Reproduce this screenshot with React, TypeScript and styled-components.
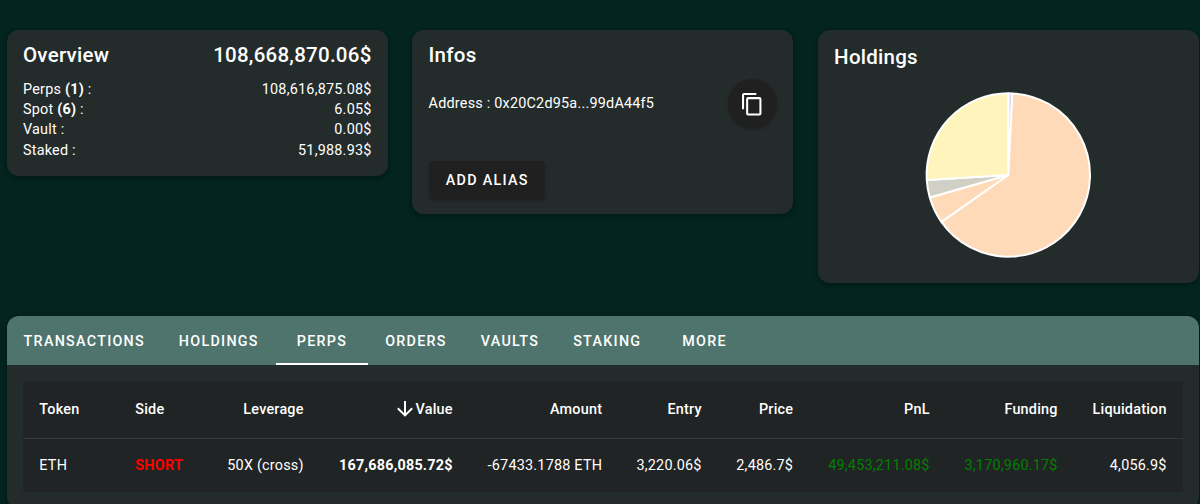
import React from 'react'
import styled, { createGlobalStyle } from 'styled-components'

const GlobalStyle = createGlobalStyle`
	* {
		box-sizing: border-box;
	}

	html {
		height: 100%;
		overflow: hidden;
		background: #03241f;
	}

	body {
		margin: 0;
		color: #fff;
		font-family: Roboto, sans-serif;
		font-size: 14.4px;
		line-height: 20.3px;
		letter-spacing: 0.22px;
	}
`

const Page = styled.main`
	height: 504px;
	padding: 30px 1px 0 6.7px;
	overflow: hidden;
`

const Cards = styled.section`
	display: grid;
	grid-template-columns: repeat(3, 1fr);
	align-items: start;
	gap: 24.4px;
	height: 286.3px;
`

const Card = styled.article<{ $height: number }>`
	display: flex;
	flex-direction: column;
	height: ${({ $height }) => $height}px;
	padding: 9px 16.3px;
	border-radius: 12px;
	background: #242c2b;
	box-shadow: 0 2px 4px rgba(0, 0, 0, 0.2), 0 1px 6px rgba(0, 0, 0, 0.12);
`

const Title = styled.h2<{ $offset?: number }>`
	display: flex;
	justify-content: space-between;
	margin: ${({ $offset = 0 }) => $offset}px 0 0;
	font-size: 20.5px;
	font-weight: 500;
	line-height: 32px;
	letter-spacing: 0.25px;
`

const Balances = styled.div`
	margin-top: 8.7px;
`

const Balance = styled.div`
	display: flex;
	justify-content: space-between;
`

const AddressRow = styled.div`
	display: flex;
	align-items: center;
	justify-content: space-between;
	height: 49px;
	margin-top: 8.4px;
`

const CopyButton = styled.button`
	display: flex;
	align-items: center;
	justify-content: center;
	width: 49px;
	height: 49px;
	padding: 0;
	border: 0;
	border-radius: 50%;
	background: #202020;
	color: #fff;
	box-shadow: 0 2px 3px rgba(0, 0, 0, 0.22);
`

const AliasButton = styled.button`
	align-self: flex-start;
	width: 116.5px;
	height: 38px;
	margin-top: 32.3px;
	padding: 1px 0 0 1px;
	border: 0;
	border-radius: 4px;
	background: #202020;
	color: #fff;
	font: 500 14.35px Roboto, sans-serif;
	letter-spacing: 1.29px;
	box-shadow: 0 2px 3px rgba(0, 0, 0, 0.22);
`

const Chart = styled.svg`
	align-self: center;
	margin: 18px 0 0;
	flex-shrink: 0;
`

const Panel = styled.section`
	height: 193px;
	overflow: hidden;
	border-radius: 12px;
	background: #242c2b;
	box-shadow: 0 2px 4px rgba(0, 0, 0, 0.2), 0 1px 6px rgba(0, 0, 0, 0.12);
`

const Tabs = styled.nav`
	display: flex;
	height: 48.9px;
	background: #4e746d;
`

const Tab = styled.button<{ $active?: boolean }>`
	min-width: 92.5px;
	padding: ${({ $active }) => ($active ? '2px' : '0')} 16.93px 0;
	border: 0;
	border-bottom: ${({ $active }) => ($active ? '2px solid #fff' : '0')};
	background: none;
	color: #fff;
	font: 500 14.3px Roboto, sans-serif;
	letter-spacing: 1.29px;
`

const Table = styled.table`
	width: 1160px;
	margin: 16px 0 0 16.3px;
	border-collapse: collapse;
	table-layout: fixed;
	background: #212424;
`

const HeadCell = styled.th<{ $left?: boolean }>`
	height: 57px;
	padding: 1.5px 16.3px 0;
	border-bottom: 1px solid #363939;
	font-weight: 500;
	text-align: ${({ $left }) => ($left ? 'left' : 'right')};
	white-space: nowrap;
`

const Cell = styled.td<{ $left?: boolean; $color?: string; $bold?: boolean }>`
	height: 53.5px;
	padding: 1px 16.3px 0;
	color: ${({ $color = '#fff' }) => $color};
	font-weight: ${({ $bold }) => ($bold ? 700 : 400)};
	text-align: ${({ $left }) => ($left ? 'left' : 'right')};
	white-space: nowrap;
`

const SortIcon = styled.svg`
	margin-right: 2px;
	vertical-align: -3px;
`

const balances = [
	{ label: 'Perps', count: 1, value: '108,616,875.08$' },
	{ label: 'Spot', count: 6, value: '6.05$' },
	{ label: 'Vault', value: '0.00$' },
	{ label: 'Staked', value: '51,988.93$' },
]

const tabs = ['TRANSACTIONS', 'HOLDINGS', 'PERPS', 'ORDERS', 'VAULTS', 'STAKING', 'MORE']

const columns = [
	{ title: 'Token', value: 'ETH', width: 96, left: true },
	{ title: 'Side', value: 'SHORT', width: 92, left: true, color: '#f00', bold: true },
	{ title: 'Leverage', value: '50X (cross)', width: 109 },
	{ title: 'Value', value: '167,686,085.72$', width: 149, bold: true, sorted: true },
	{ title: 'Amount', value: '-67433.1788 ETH', width: 149.5 },
	{ title: 'Entry', value: '3,220.06$', width: 99.5 },
	{ title: 'Price', value: '2,486.7$', width: 91.5 },
	{ title: 'PnL', value: '49,453,211.08$', width: 136.5, color: '#008000' },
	{ title: 'Funding', value: '3,170,960.17$', width: 128, color: '#008000' },
	{ title: 'Liquidation', value: '4,056.9$', width: 109 },
]

// angles in degrees, clockwise from the top
const slices = [
	{ from: 0, to: 2.9, fill: '#dcd3ee' },
	{ from: 2.9, to: 235, fill: '#ffdab9' },
	{ from: 235, to: 254, fill: '#ffdab9' },
	{ from: 254, to: 266.5, fill: '#d0d0c4' },
	{ from: 266.5, to: 360, fill: '#fff4bc' },
]

const RADIUS = 81.7

function slicePath(from: number, to: number) {
	const point = (angle: number) => {
		const rad = (angle * Math.PI) / 180
		return `${RADIUS * Math.sin(rad)} ${-RADIUS * Math.cos(rad)}`
	}

	return `M0 0L${point(from)}A${RADIUS} ${RADIUS} 0 ${to - from > 180 ? 1 : 0} 1 ${point(to)}Z`
}

const HoldingsChart = () => (
	<Chart width="168" height="168" viewBox="-84.3 -84 168 168">
		{slices.map(({ from, to, fill }) => (
			<path
				key={from}
				d={slicePath(from, to)}
				fill={fill}
				stroke="#fff"
				strokeWidth="2"
				strokeLinejoin="bevel"
			/>
		))}
	</Chart>
)

export default function App() {
	return (
		<Page>
			<GlobalStyle />
			<Cards>
				<Card $height={146}>
					<Title>
						<span>Overview</span>
						<span>108,668,870.06$</span>
					</Title>
					<Balances>
						{balances.map(({ label, count, value }) => (
							<Balance key={label}>
								<span>
									{label} {count && <b>({count})</b>} :
								</span>
								<span>{value}</span>
							</Balance>
						))}
					</Balances>
				</Card>
				<Card $height={183.6}>
					<Title>Infos</Title>
					<AddressRow>
						<span>Address : 0x20C2d95a...99dA44f5</span>
						<CopyButton aria-label="Copy">
							<svg width="24.5" height="24.5" viewBox="0 0 24 24" fill="currentColor">
								<path d="M19 21H8V7h11m0-2H8a2 2 0 0 0-2 2v14a2 2 0 0 0 2 2h11a2 2 0 0 0 2-2V7a2 2 0 0 0-2-2m-3-4H4a2 2 0 0 0-2 2v14h2V3h12V1Z" />
							</svg>
						</CopyButton>
					</AddressRow>
					<AliasButton>ADD ALIAS</AliasButton>
				</Card>
				<Card $height={253}>
					<Title $offset={2}>Holdings</Title>
					<HoldingsChart />
				</Card>
			</Cards>
			<Panel>
				<Tabs>
					{tabs.map((tab) => (
						<Tab key={tab} $active={tab === 'PERPS'}>
							{tab}
						</Tab>
					))}
				</Tabs>
				<Table>
					<colgroup>
						{columns.map(({ title, width }) => (
							<col key={title} width={width} />
						))}
					</colgroup>
					<thead>
						<tr>
							{columns.map(({ title, left, sorted }) => (
								<HeadCell key={title} $left={left}>
									{sorted && (
										<SortIcon width="16" height="16" viewBox="4 4 16 16" fill="currentColor">
											<path d="M11 4h2v12l5.5-5.5 1.42 1.42L12 19.84l-7.92-7.92L5.5 10.5 11 16V4Z" />
										</SortIcon>
									)}
									{title}
								</HeadCell>
							))}
						</tr>
					</thead>
					<tbody>
						<tr>
							{columns.map(({ title, value, left, color, bold }) => (
								<Cell key={title} $left={left} $color={color} $bold={bold}>
									{value}
								</Cell>
							))}
						</tr>
					</tbody>
				</Table>
			</Panel>
		</Page>
	)
}
